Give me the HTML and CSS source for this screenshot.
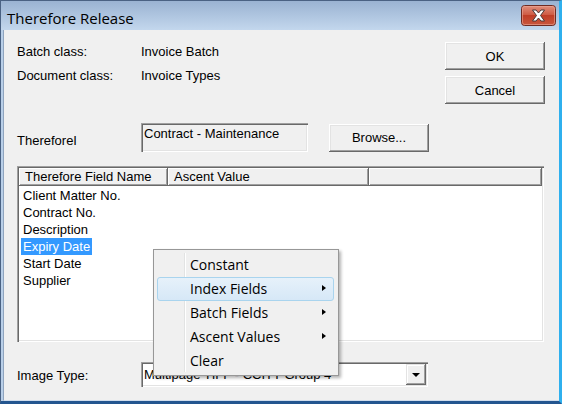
FILE: index.html
```html
<!DOCTYPE html>
<html>
<head>
<meta charset="utf-8">
<link rel="stylesheet" href="styles.css">
</head>
<body>
<div class="window">
  <div class="titlebar">
    <span class="title">Therefore Release</span>
    <div class="close">
      <svg width="35" height="21" viewBox="0 0 35 21">
        <defs>
          <linearGradient id="cg" x1="0" y1="0" x2="0" y2="1">
            <stop offset="0" stop-color="#e0907e"/>
            <stop offset="0.45" stop-color="#cf5d46"/>
            <stop offset="0.5" stop-color="#c03e27"/>
            <stop offset="1" stop-color="#c9573d"/>
          </linearGradient>
        </defs>
        <rect x="0.5" y="0.5" width="34" height="20" rx="3" fill="url(#cg)" stroke="#6e2b22"/>
        <rect x="1.5" y="1.5" width="32" height="18" rx="2" fill="none" stroke="#eba999" stroke-opacity="0.6"/>
        <path d="M11.5 5 L15 5 L17.5 8 L20 5 L23.5 5 L19.5 10.5 L23.5 16 L20 16 L17.5 13 L15 16 L11.5 16 L15.5 10.5 Z" fill="#ffffff" stroke="#4a3a38" stroke-width="1" stroke-linejoin="round"/>
      </svg>
    </div>
  </div>
  <div class="client">
    <div class="top">
      <div class="info">
        <div class="inforow"><span class="lbl">Batch class:</span><span>Invoice Batch</span></div>
        <div class="inforow"><span class="lbl">Document class:</span><span>Invoice Types</span></div>
      </div>
      <div class="btncol">
        <div class="btn">OK</div>
        <div class="btn">Cancel</div>
      </div>
    </div>
    <div class="therow">
      <span class="lbl">ThereforeI</span>
      <div class="rofield">Contract - Maintenance</div>
      <div class="btn browse">Browse...</div>
    </div>
    <div class="list">
      <div class="hdr">
        <div class="hc c1">Therefore Field Name</div>
        <div class="hc c2">Ascent Value</div>
        <div class="hc c3"></div>
      </div>
      <div class="rows">
        <div class="row"><span class="item">Client Matter No.</span></div>
        <div class="row"><span class="item">Contract No.</span></div>
        <div class="row"><span class="item">Description</span></div>
        <div class="row"><span class="item sel">Expiry Date</span></div>
        <div class="row"><span class="item">Start Date</span></div>
        <div class="row"><span class="item">Supplier</span></div>
      </div>
    </div>
    <div class="imgrow">
      <span class="lbl">Image Type:</span>
      <div class="combo">
        <span class="combotext">Multipage TIFF - CCITT Group 4</span>
        <div class="dropbtn"><span class="tri"></span></div>
      </div>
    </div>
  </div>
  <div class="menu">
    <div class="gutter"></div>
    <div class="mi">Constant</div>
    <div class="mi hover">Index Fields<span class="arrow"></span></div>
    <div class="mi">Batch Fields<span class="arrow"></span></div>
    <div class="mi">Ascent Values<span class="arrow"></span></div>
    <div class="mi">Clear</div>
  </div>
</div>
</body>
</html>
```
FILE: styles.css
```css
html, body {
  margin: 0;
  padding: 0;
  background: #f0f0f0;
}
body {
  font-family: "Liberation Sans", Arial, sans-serif;
  font-size: 13px;
  color: #000;
}
.window {
  position: relative;
  width: 562px;
  height: 404px;
  box-sizing: border-box;
  background: #b9cfe8;
  border-left: 1px solid #4a6283;
  border-top: 1px solid #4a6283;
  border-right: 3px solid #2fb0ee;
  border-bottom: 3px solid #23558f;
  display: flex;
  flex-direction: column;
}
.titlebar {
  height: 29px;
  flex: none;
  display: flex;
  align-items: flex-start;
  background: linear-gradient(#9ab3d2, #c3d7ed);
}
.title {
  font-family: "Open Sans", "Noto Sans", sans-serif;
  font-size: 15px;
  line-height: 20px;
  margin: 7px 0 0 6px;
  color: #000;
}
.close {
  margin: 4px 3px 0 auto;
  width: 35px;
  height: 21px;
}
.close svg { display: block; }
.client {
  flex: 1;
  margin-left: 2px;
  border-left: 1px solid #8fa4be;
  border-bottom: 1px solid #cfdcec;
  background: #f0f0f0;
  padding: 0 14px 0 13px;
  display: flex;
  flex-direction: column;
}
.top {
  display: flex;
  justify-content: space-between;
  align-items: flex-start;
  height: 74px;
}
.info {
  margin-top: 10px;
}
.inforow {
  display: flex;
  line-height: 24px;
  height: 24px;
}
.lbl {
  width: 124px;
  flex: none;
}
.btncol {
  margin-top: 12px;
  display: flex;
  flex-direction: column;
  gap: 6px;
}
.btn {
  width: 100px;
  height: 28px;
  box-sizing: border-box;
  background: #f0f0f0;
  box-shadow: inset -1px -1px #696969, inset 1px 1px #ffffff, inset -2px -2px #a0a0a0, inset 2px 2px #e3e3e3;
  display: flex;
  align-items: center;
  justify-content: center;
}
.therow {
  margin-top: 19px;
  display: flex;
  align-items: center;
  height: 29px;
}
.therow .lbl {
  padding-top: 5px;
}
.rofield {
  width: 167px;
  height: 29px;
  box-sizing: border-box;
  background: #f0f0f0;
  box-shadow: inset 1px 1px #a0a0a0, inset 2px 2px #696969, inset -1px -1px #ffffff, inset -2px -2px #e3e3e3;
  padding: 3px 0 0 3px;
  line-height: 15px;
}
.browse {
  margin-left: 21px;
}
.list {
  margin-top: 14px;
  width: 527px;
  height: 176px;
  box-sizing: border-box;
  background: #fff;
  padding: 2px;
  box-shadow: inset 1px 1px #a0a0a0, inset 2px 2px #696969, inset -1px -1px #ffffff, inset -2px -2px #e3e3e3;
  display: flex;
  flex-direction: column;
}
.hdr {
  display: flex;
  height: 18px;
  flex: none;
}
.hc {
  box-sizing: border-box;
  height: 18px;
  background: #f0f0f0;
  box-shadow: inset -1px -1px #696969, inset 1px 1px #ffffff, inset -2px -2px #a0a0a0;
  line-height: 18px;
  padding-left: 6px;
}
.c1 { width: 149px; }
.c2 { width: 201px; }
.c3 { flex: 1; }
.rows {
  padding-top: 1px;
}
.row {
  height: 17px;
  line-height: 17px;
  padding-left: 2px;
}
.item {
  display: inline-block;
  padding: 0 2px;
}
.item.sel {
  background: #3399ff;
  color: #fff;
}
.imgrow {
  margin-top: 20px;
  display: flex;
  align-items: center;
  height: 25px;
}
.imgrow .lbl {
  padding-top: 1px;
}
.combo {
  position: relative;
  width: 287px;
  height: 25px;
  box-sizing: border-box;
  background: #fff;
  box-shadow: inset 1px 1px #a0a0a0, inset 2px 2px #696969, inset -1px -1px #ffffff, inset -2px -2px #e3e3e3;
  display: flex;
  align-items: center;
  padding: 2px;
}
.combotext {
  flex: 1;
  padding-left: 1px;
  line-height: 15px;
}
.dropbtn {
  width: 20px;
  height: 21px;
  box-sizing: border-box;
  background: #f0f0f0;
  box-shadow: inset -1px -1px #696969, inset 1px 1px #e3e3e3, inset -2px -2px #a0a0a0, inset 2px 2px #ffffff;
  display: flex;
  align-items: center;
  justify-content: center;
}
.tri {
  width: 0;
  height: 0;
  border-left: 4px solid transparent;
  border-right: 4px solid transparent;
  border-top: 4px solid #000;
  margin-top: 1px;
}
.menu {
  position: absolute;
  left: 152px;
  top: 248px;
  width: 186px;
  height: 127px;
  box-sizing: border-box;
  background: #f0f0f0;
  border: 1px solid #979797;
  padding: 3px 4px 3px 3px;
  box-shadow: 2px 2px 3px rgba(0, 0, 0, 0.3);
  font-family: "Open Sans", "Noto Sans", sans-serif;
  font-size: 14px;
}
.gutter {
  position: absolute;
  left: 30px;
  top: 3px;
  bottom: 3px;
  width: 1px;
  background: #e2e3e3;
  border-right: 1px solid #ffffff;
}
.mi {
  position: relative;
  height: 24px;
  line-height: 23px;
  padding-left: 33px;
  box-sizing: border-box;
  color: #000;
}
.mi.hover {
  border: 1px solid #a9d4ee;
  border-radius: 3px;
  background: linear-gradient(#e6f1fa, #d6e8f7);
  padding-left: 32px;
  line-height: 21px;
}
.arrow {
  position: absolute;
  right: 8px;
  top: 8px;
  width: 0;
  height: 0;
  border-top: 3.5px solid transparent;
  border-bottom: 3.5px solid transparent;
  border-left: 4px solid #000;
}
.mi.hover .arrow {
  right: 7px;
  top: 7px;
}
```
